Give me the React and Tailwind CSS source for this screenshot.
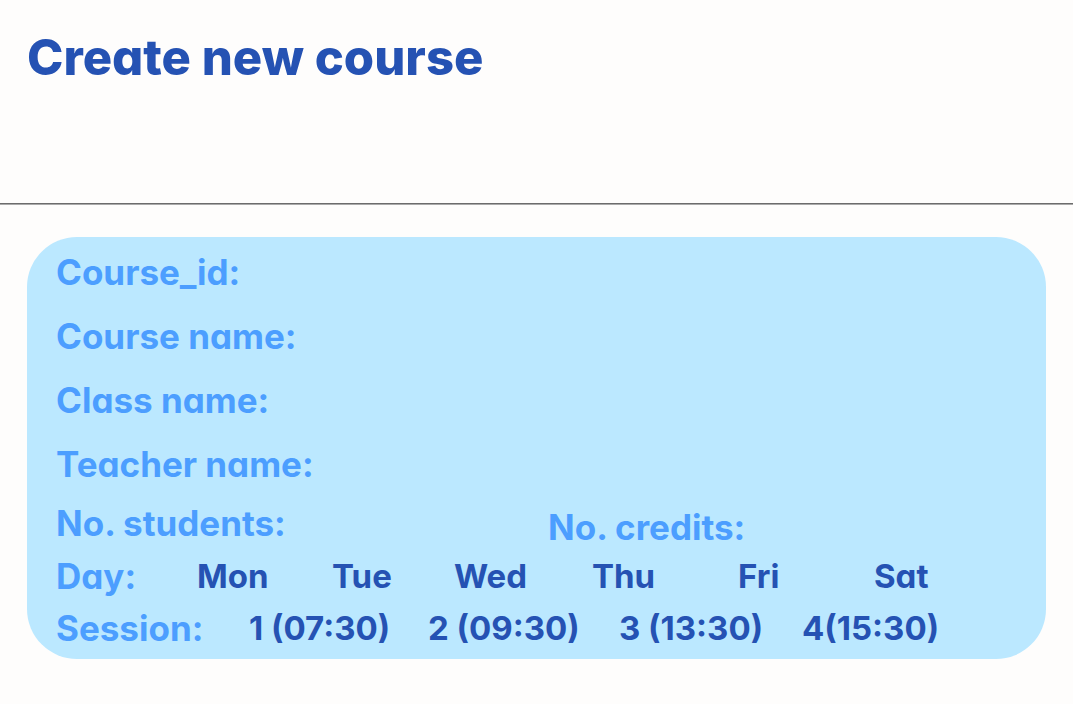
const textFields = [
  { id: 'course-id', label: 'Course_id:' },
  { id: 'course-name', label: 'Course name:' },
  { id: 'class-name', label: 'Class name:' },
  { id: 'teacher-name', label: 'Teacher name:' },
];

const days = ['Mon', 'Tue', 'Wed', 'Thu', 'Fri', 'Sat'];
const sessions = ['1 (07:30)', '2 (09:30)', '3 (13:30)', '4(15:30)'];

function Field({ id, label }) {
  return (
    <div className="flex min-w-0 items-center gap-3">
      <label htmlFor={id} className="shrink-0 whitespace-nowrap">
        {label}
      </label>
      <input
        id={id}
        type="text"
        className="h-10 w-full min-w-0 bg-transparent text-[#2552b3] outline-none"
      />
    </div>
  );
}

function Option({ children }) {
  return (
    <button
      type="button"
      className="cursor-pointer text-left text-[33px] leading-10 font-bold whitespace-nowrap text-[#2552b3]"
    >
      {children}
    </button>
  );
}

export default function App() {
  return (
    <main className="min-h-screen bg-[#fefdfc] pb-11 font-['Inter',sans-serif] font-bold [font-feature-settings:'cv11']">
      <header className="px-[27px] pt-7 pb-[115px]">
        <h1 className="text-[49px] leading-[60px] font-extrabold text-[#2552b3]">Create new course</h1>
      </header>
      <hr className="h-[2px] border-t border-b border-t-[#6c6c6c] border-b-[#aaaaaa]" />
      <form className="mx-[27px] mt-8 rounded-[50px] bg-[#bbe8ff] px-[29px] pt-[3px] pb-[5px] text-[35px] leading-10 text-[#4c9eff]">
        {textFields.map((field) => (
          <div key={field.id} className="grid h-16 items-center">
            <Field id={field.id} label={field.label} />
          </div>
        ))}
        <div className="grid h-[54px] grid-cols-[492fr_469fr] items-center">
          <Field id="students" label="No. students:" />
          <div className="pt-2">
            <Field id="credits" label="No. credits:" />
          </div>
        </div>
        <div role="group" aria-labelledby="day-label" className="flex h-[52px] items-center">
          <span id="day-label" className="w-[141px] shrink-0">
            Day:
          </span>
          <div className="grid flex-1 grid-cols-[135fr_122fr_138fr_146fr_136fr_143fr]">
            {days.map((day) => (
              <Option key={day}>{day}</Option>
            ))}
          </div>
        </div>
        <div role="group" aria-labelledby="session-label" className="flex h-[52px] items-center">
          <span id="session-label" className="w-[193px] shrink-0">
            Session:
          </span>
          <div className="grid flex-1 grid-cols-[179fr_191fr_183fr_215fr]">
            {sessions.map((session) => (
              <Option key={session}>{session}</Option>
            ))}
          </div>
        </div>
      </form>
    </main>
  );
}
